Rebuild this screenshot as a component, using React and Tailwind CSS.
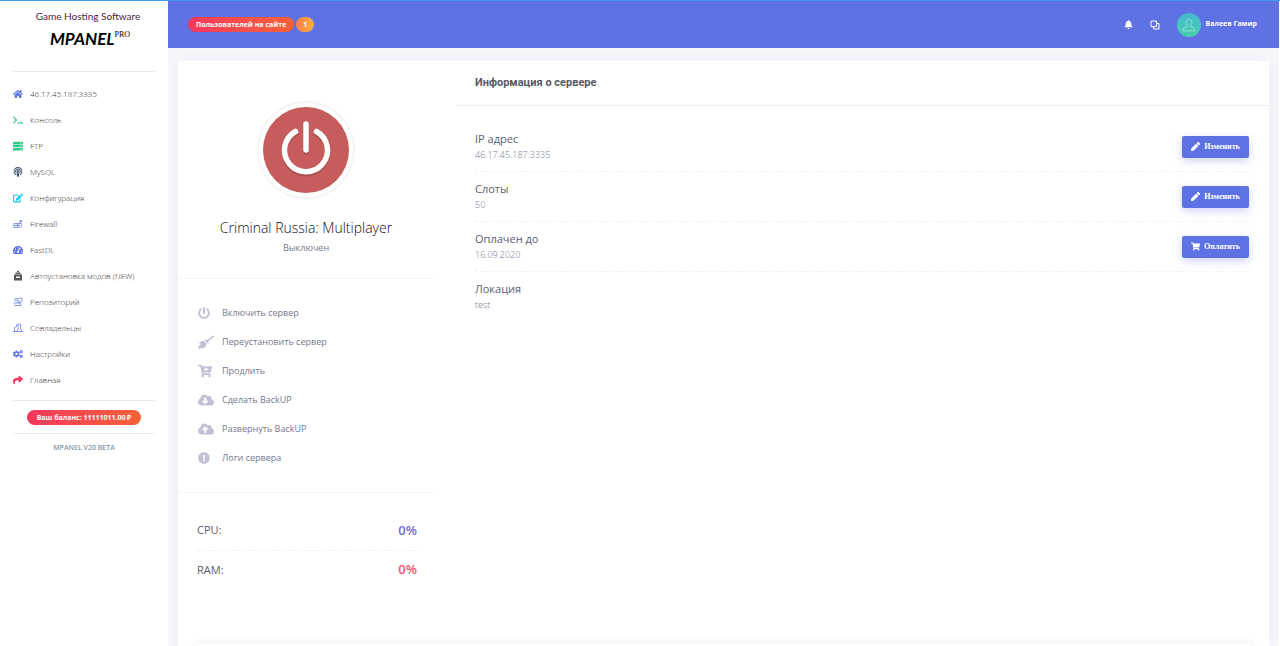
import {
  FaHome, FaTerminal, FaServer, FaPodcast, FaEdit, FaTachometerAlt, FaCogs, FaShare,
  FaPowerOff, FaBroom, FaCartPlus, FaCloudDownloadAlt, FaCloudUploadAlt,
  FaExclamationCircle, FaPen, FaShoppingCart, FaBell,
} from "react-icons/fa";

function KeyIcon(props) {
  return (
    <svg viewBox="0 0 20 20" width="1em" height="1em" fill="none" stroke="currentColor" strokeWidth="1.8" {...props}>
      <path d="M2 9h7v8H2zM2 13h10M12 17V9h5v4c0 3-2 4-5 4zM14 9V3h4M8 9h4M13 5h5" />
    </svg>
  );
}

function BagIcon(props) {
  return (
    <svg viewBox="0 0 20 20" width="1em" height="1em" fill="currentColor" {...props}>
      <path d="M8 0h4v2H8zM5 3h10v3H5zM2 7h16v12H2zm4 4v3h8v-3z" fillRule="evenodd" />
    </svg>
  );
}

function RepoIcon(props) {
  return (
    <svg viewBox="0 0 20 20" width="1em" height="1em" fill="none" stroke="currentColor" strokeWidth="1.5" {...props}>
      <path d="M2 7l3-4 6 1 2-2h4l2 4-3 4-4-1-3-3-5 1M8 9l5 3M1 12h14l1 5H4l-2-2" />
    </svg>
  );
}

function OwnersIcon(props) {
  return (
    <svg viewBox="0 0 20 20" width="1em" height="1em" fill="none" stroke="currentColor" strokeWidth="1.5" {...props}>
      <path d="M0 17h20M3 17V9l4-2V4l4-2h4v9l2 3v3M10 4v9l-3 4" />
    </svg>
  );
}

function CopyIcon(props) {
  return (
    <svg viewBox="0 0 20 20" width="1em" height="1em" fill="none" stroke="currentColor" strokeWidth="2" {...props}>
      <path d="M2 2h11v11H2zM13 7h5v11H7v-5" />
    </svg>
  );
}

function UserIcon(props) {
  return (
    <svg viewBox="0 0 24 24" width="1em" height="1em" fill="none" stroke="currentColor" strokeWidth="1.3" {...props}>
      <path d="M12 2c-3.200 0-5 2.300-5 5.500 0 2.400 1 4.300 2.500 5.300v2C6 16 2 16.500 2 20v2h20v-2c0-3.500-4-4-7.500-5.200v-2c1.500-1 2.500-2.900 2.500-5.300C17 4.300 15.200 2 12 2z" />
    </svg>
  );
}

const nav = [
  { label: "46.17.45.187:3335", Icon: FaHome, color: "text-[#5e72e4]" },
  { label: "Консоль", Icon: FaTerminal, color: "text-[#2dce89]" },
  { label: "FTP", Icon: FaServer, color: "text-[#2dce89]" },
  { label: "MySQL", Icon: FaPodcast, color: "text-[#4a5573]" },
  { label: "Конфигурация", Icon: FaEdit, color: "text-[#11cdef]" },
  { label: "Firewall", Icon: KeyIcon, color: "text-[#7b8bea]" },
  { label: "FastDL", Icon: FaTachometerAlt, color: "text-[#5e72e4]" },
  { label: "Автоустановка модов (NEW)", Icon: BagIcon, color: "text-[#555555]" },
  { label: "Репозиторий", Icon: RepoIcon, color: "text-[#5e72e4]" },
  { label: "Совладельцы", Icon: OwnersIcon, color: "text-[#5e72e4]" },
  { label: "Настройки", Icon: FaCogs, color: "text-[#5e72e4]" },
  { label: "Главная", Icon: FaShare, color: "text-[#f5365c]" },
];

const actions = [
  { label: "Включить сервер", Icon: FaPowerOff, size: "size-3" },
  { label: "Переустановить сервер", Icon: FaBroom, size: "size-4" },
  { label: "Продлить", Icon: FaCartPlus, size: "size-3.5" },
  { label: "Сделать BackUP", Icon: FaCloudDownloadAlt, size: "size-4" },
  { label: "Развернуть BackUP", Icon: FaCloudUploadAlt, size: "size-4" },
  { label: "Логи сервера", Icon: FaExclamationCircle, size: "size-3" },
];

const info = [
  { title: "IP адрес", value: "46.17.45.187:3335", action: "Изменить", Icon: FaPen },
  { title: "Слоты", value: "50", action: "Изменить", Icon: FaPen },
  { title: "Оплачен до", value: "16.09.2020", action: "Оплатить", Icon: FaShoppingCart },
  { title: "Локация", value: "test" },
];

function Sidebar() {
  return (
    <aside className="w-[168px] shrink-0 bg-white px-[13px] pt-[7px]">
      <a href="#" className="flex h-[63px] flex-col items-center pl-2 text-black">
        <span className="font-['Lato',sans-serif] text-[10px] leading-4 text-[#4a2545]">Game Hosting Software</span>
        <span className="mt-[3px] flex pl-1 leading-6">
          <span className="font-['Lato',sans-serif] text-[17px] font-bold italic">MPANEL</span>
          <sup className="top-0 font-['Liberation_Serif',serif] text-[8px] leading-4">PRO</sup>
        </span>
      </a>
      <nav className="border-y border-[#e9e9ec] pt-[9px] pb-[7px]">
        <ul>
          {nav.map(({ label, Icon, color }) => (
            <li key={label}>
              <a href="#" className="flex h-[26px] items-center gap-[7px] text-[8px] font-light text-[#333333]">
                <Icon className={`size-[10px] shrink-0 ${color}`} />
                <span className="whitespace-nowrap">{label}</span>
              </a>
            </li>
          ))}
        </ul>
      </nav>
      <div className="flex h-[33px] items-center justify-center border-b border-[#e9e9ec]">
        <span className="rounded-full bg-linear-to-r from-[#f5365c] to-[#f56036] px-[10px] text-[7px] leading-[15px] font-bold whitespace-nowrap text-white">
          Ваш баланс: 11111011.00 ₽
        </span>
      </div>
      <p className="pt-[9px] text-center text-[7px] leading-[10px] font-semibold text-[#8898aa]">MPANEL V20 BETA</p>
    </aside>
  );
}

function Header() {
  return (
    <header className="flex h-[47px] shrink-0 items-center justify-between bg-[#5e72e4] pr-[22px] pl-5 text-white">
      <div className="flex gap-[2px] text-[7px] leading-[15px] font-bold">
        <span className="rounded-full bg-linear-to-r from-[#f5365c] to-[#f56036] px-2">Пользователей на сайте</span>
        <span className="rounded-full bg-linear-to-r from-[#fb7c48] to-[#fbb140] px-[7px]">1</span>
      </div>
      <div className="flex items-center">
        <button type="button" aria-label="Уведомления"><FaBell className="size-[9px]" /></button>
        <button type="button" aria-label="Окна" className="ml-[17px]"><CopyIcon className="size-[10px]" /></button>
        <button type="button" className="ml-[17px] flex items-center gap-[5px] text-[7px] font-bold">
          <span className="flex size-6 items-center justify-center rounded-full bg-linear-to-b from-[#45b9cf] to-[#48cfad]">
            <UserIcon className="size-[14px] text-[#a5ebe0]" />
          </span>
          Валеев Гамир
        </button>
      </div>
    </header>
  );
}

function PowerBadge() {
  return (
    <div className="rounded-full border-2 border-[#f5f5f8] p-1">
      <svg viewBox="0 0 86 86" className="size-[86px]">
        <circle cx="43" cy="43" r="43" fill="#c75c5c" />
        <g fill="none" strokeWidth="5.500" strokeLinecap="round">
          <g stroke="#a84c4c" transform="translate(0 2)">
            <path d="M32.500 24.500a21.500 21.500 0 1 0 21 0" />
            <path d="M43 17v26" />
          </g>
          <g stroke="#ffffff">
            <path d="M32.500 24.500a21.500 21.500 0 1 0 21 0" />
            <path d="M43 17v26" />
          </g>
        </g>
      </svg>
    </div>
  );
}

function ServerPanel() {
  return (
    <section className="w-[256px] shrink-0">
      <div className="flex h-[218px] flex-col items-center border-b border-[#f4f4f8] pt-10">
        <PowerBadge />
        <h1 className="mt-[19px] text-[14px] leading-5 font-light text-[#111018]">Criminal Russia: Multiplayer</h1>
        <p className="mt-[2px] text-[9px] leading-4 text-[#74788d]">Выключен</p>
      </div>
      <ul className="h-[214px] border-b border-[#f4f4f8] pt-[19px] pl-5">
        {actions.map(({ label, Icon, size }) => (
          <li key={label}>
            <a href="#" className="flex h-[29px] items-center text-[9px] text-[#74788d]">
              <span className="w-6"><Icon className={`${size} text-[#c3c0d6]`} /></span>
              {label}
            </a>
          </li>
        ))}
      </ul>
      <dl className="pt-[18px] pr-[17px] pl-[19px]">
        <div className="flex h-10 items-center justify-between border-b border-dashed border-[#f0f1f5] text-[11px]">
          <dt className="text-[#595d6e]">CPU:</dt>
          <dd className="text-[13px] font-semibold text-[#716aca]">0%</dd>
        </div>
        <div className="flex h-[38px] items-center justify-between text-[11px]">
          <dt className="text-[#595d6e]">RAM:</dt>
          <dd className="text-[13px] font-semibold text-[#f4516c]">0%</dd>
        </div>
      </dl>
    </section>
  );
}

function InfoPanel() {
  return (
    <section className="ml-[22px] min-w-0 flex-1">
      <h2 className="flex h-[45px] items-center border-b border-[#ebedf2] pl-[19px] font-['Roboto',sans-serif] text-[11px] font-bold text-[#5a5866]">
        Информация о сервере
      </h2>
      <ul className="pt-4 pr-5 pl-[19px]">
        {info.map(({ title, value, action, Icon }) => (
          <li key={title} className="flex h-[50px] items-center justify-between border-b border-dashed border-[#f0f1f5] last:border-0">
            <div>
              <h3 className="text-[11px] leading-4 text-[#595d6e]">{title}</h3>
              <p className="text-[9px] leading-4 font-light text-[#777b94]">{value}</p>
            </div>
            {action && (
              <button type="button" className="flex h-[22px] w-[67px] items-center justify-center gap-1 rounded-[2px] bg-[#5e72e4] font-['Liberation_Serif',serif] text-[8px] font-bold text-white shadow-[0_3px_8px_rgba(94,114,228,0.3)]">
                <Icon className="size-[9px]" />
                {action}
              </button>
            )}
          </li>
        ))}
      </ul>
    </section>
  );
}

export default function App() {
  return (
    <div className="flex h-screen flex-col overflow-hidden bg-white font-['Open_Sans',sans-serif]">
      <div className="h-px shrink-0 bg-[#4299ee]" />
      <div className="flex min-h-0 flex-1">
        <Sidebar />
        <div className="mr-px flex min-w-0 flex-1 flex-col bg-[#f6f7fc]">
          <Header />
          <main className="mx-[10px] mt-[13px] flex min-h-0 flex-1 flex-col bg-white shadow-[0_0_12px_rgba(82,63,105,0.06)]">
            <div className="flex h-[583px] shrink-0">
              <ServerPanel />
              <InfoPanel />
            </div>
            <div className="mx-[19px] h-10 shrink-0 bg-white shadow-[0_0_10px_rgba(82,63,105,0.1)]" />
          </main>
        </div>
      </div>
    </div>
  );
}
